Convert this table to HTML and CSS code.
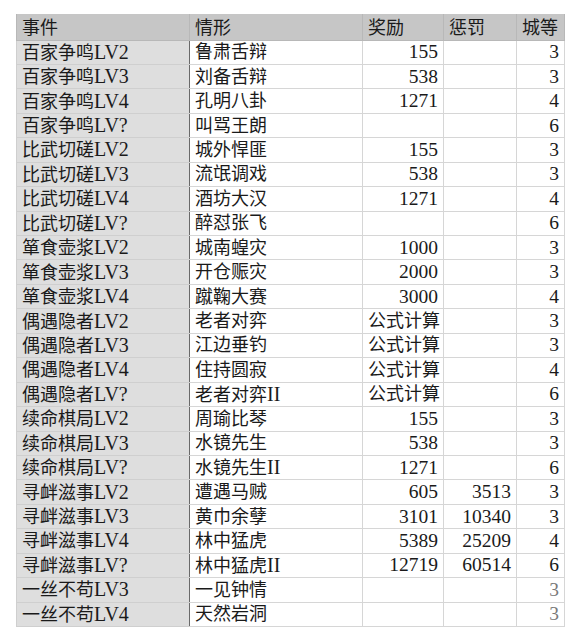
FILE: index.html
```html
<!DOCTYPE html>
<html lang="zh">
<head>
<meta charset="utf-8">
<title>事件表</title>
<link rel="stylesheet" href="styles.css">
</head>
<body>
<table class="sheet">
  <colgroup>
    <col class="c-event"><col class="c-case"><col class="c-reward"><col class="c-penalty"><col class="c-level">
  </colgroup>
  <thead>
    <tr><th>事件</th><th>情形</th><th>奖励</th><th>惩罚</th><th>城等</th></tr>
  </thead>
  <tbody>
    <tr><td class="ev">百家争鸣<span class="lv">LV2</span></td><td>鲁肃舌辩</td><td class="num">155</td><td class="num"></td><td class="num">3</td></tr>
    <tr><td class="ev">百家争鸣<span class="lv">LV3</span></td><td>刘备舌辩</td><td class="num">538</td><td class="num"></td><td class="num">3</td></tr>
    <tr><td class="ev">百家争鸣<span class="lv">LV4</span></td><td>孔明八卦</td><td class="num">1271</td><td class="num"></td><td class="num">4</td></tr>
    <tr><td class="ev">百家争鸣<span class="lv">LV?</span></td><td>叫骂王朗</td><td class="num"></td><td class="num"></td><td class="num">6</td></tr>
    <tr><td class="ev">比武切磋<span class="lv">LV2</span></td><td>城外悍匪</td><td class="num">155</td><td class="num"></td><td class="num">3</td></tr>
    <tr><td class="ev">比武切磋<span class="lv">LV3</span></td><td>流氓调戏</td><td class="num">538</td><td class="num"></td><td class="num">3</td></tr>
    <tr><td class="ev">比武切磋<span class="lv">LV4</span></td><td>酒坊大汉</td><td class="num">1271</td><td class="num"></td><td class="num">4</td></tr>
    <tr><td class="ev">比武切磋<span class="lv">LV?</span></td><td>醉怼张飞</td><td class="num"></td><td class="num"></td><td class="num">6</td></tr>
    <tr><td class="ev">箪食壶浆<span class="lv">LV2</span></td><td>城南蝗灾</td><td class="num">1000</td><td class="num"></td><td class="num">3</td></tr>
    <tr><td class="ev">箪食壶浆<span class="lv">LV3</span></td><td>开仓赈灾</td><td class="num">2000</td><td class="num"></td><td class="num">3</td></tr>
    <tr><td class="ev">箪食壶浆<span class="lv">LV4</span></td><td>蹴鞠大赛</td><td class="num">3000</td><td class="num"></td><td class="num">4</td></tr>
    <tr><td class="ev">偶遇隐者<span class="lv">LV2</span></td><td>老者对弈</td><td>公式计算</td><td class="num"></td><td class="num">3</td></tr>
    <tr><td class="ev">偶遇隐者<span class="lv">LV3</span></td><td>江边垂钓</td><td>公式计算</td><td class="num"></td><td class="num">3</td></tr>
    <tr><td class="ev">偶遇隐者<span class="lv">LV4</span></td><td>住持圆寂</td><td>公式计算</td><td class="num"></td><td class="num">4</td></tr>
    <tr><td class="ev">偶遇隐者<span class="lv">LV?</span></td><td>老者对弈<span class="lv">II</span></td><td>公式计算</td><td class="num"></td><td class="num">6</td></tr>
    <tr><td class="ev">续命棋局<span class="lv">LV2</span></td><td>周瑜比琴</td><td class="num">155</td><td class="num"></td><td class="num">3</td></tr>
    <tr><td class="ev">续命棋局<span class="lv">LV3</span></td><td>水镜先生</td><td class="num">538</td><td class="num"></td><td class="num">3</td></tr>
    <tr><td class="ev">续命棋局<span class="lv">LV?</span></td><td>水镜先生<span class="lv">II</span></td><td class="num">1271</td><td class="num"></td><td class="num">6</td></tr>
    <tr><td class="ev">寻衅滋事<span class="lv">LV2</span></td><td>遭遇马贼</td><td class="num">605</td><td class="num">3513</td><td class="num">3</td></tr>
    <tr><td class="ev">寻衅滋事<span class="lv">LV3</span></td><td>黄巾余孽</td><td class="num">3101</td><td class="num">10340</td><td class="num">3</td></tr>
    <tr><td class="ev">寻衅滋事<span class="lv">LV4</span></td><td>林中猛虎</td><td class="num">5389</td><td class="num">25209</td><td class="num">4</td></tr>
    <tr><td class="ev">寻衅滋事<span class="lv">LV?</span></td><td>林中猛虎<span class="lv">II</span></td><td class="num">12719</td><td class="num">60514</td><td class="num">6</td></tr>
    <tr><td class="ev">一丝不苟<span class="lv">LV3</span></td><td>一见钟情</td><td class="num"></td><td class="num"></td><td class="num faint">3</td></tr>
    <tr><td class="ev">一丝不苟<span class="lv">LV4</span></td><td>天然岩洞</td><td class="num"></td><td class="num"></td><td class="num faint">3</td></tr>
  </tbody>
</table>
</body>
</html>
```
FILE: styles.css
```css
html, body {
  margin: 0;
  padding: 0;
  background: #ffffff;
}

body {
  padding: 14px 0 0 16px;
}

.sheet {
  border-collapse: collapse;
  table-layout: fixed;
  width: 548px;
  font-family: "Liberation Serif", "Noto Sans CJK SC", serif;
  font-size: 18px;
  color: #1a1a1a;
}

.c-event { width: 173px; }
.c-case { width: 173px; }
.c-reward { width: 81px; }
.c-penalty { width: 73px; }
.c-level { width: 48px; }

.sheet th,
.sheet td {
  padding: 0 5px;
  line-height: 22px;
  white-space: nowrap;
  overflow: hidden;
  border: 1px solid #d6d6d6;
  text-align: left;
  font-weight: normal;
}

.sheet thead tr {
  height: 26px;
}

.sheet thead th {
  background: #c6c6c6;
  border-color: #b8b8b8;
  border-top: none;
  padding-top: 2px;
}

.sheet tbody tr {
  height: 24.45px;
}

.sheet td.ev {
  background: #dedede;
  border-color: #cfcfcf;
  border-right: 1px solid #6a6a6a;
}

.lv {
  font-size: 20px;
}

.sheet td.num {
  text-align: right;
  font-size: 19.5px;
}

.sheet td.faint {
  color: #7a7a7a;
}
```
